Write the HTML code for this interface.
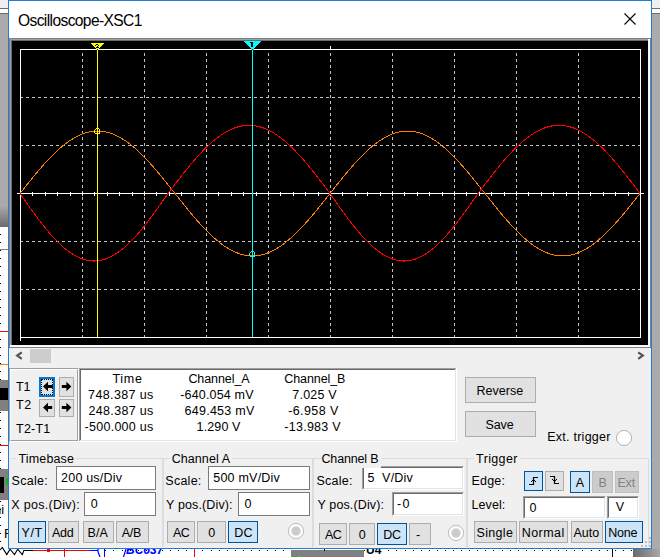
<!DOCTYPE html>
<html><head><meta charset="utf-8"><style>
html,body{margin:0;padding:0;}
body{width:660px;height:557px;overflow:hidden;position:relative;font-family:"Liberation Sans", sans-serif;}
</style></head><body>
<div style="position:absolute;left:0px;top:0px;width:660px;height:557px;background:#ffffff"></div><div style="position:absolute;left:0px;top:0px;width:8px;height:8px;background:#f0f0f0"></div><div style="position:absolute;left:0px;top:8px;width:8px;height:1px;background:#6d6d6d"></div><div style="position:absolute;left:0px;top:9px;width:8px;height:4px;background:#ffffff"></div><div style="position:absolute;left:0px;top:13px;width:8px;height:1px;background:#6d6d6d"></div><div style="position:absolute;left:0px;top:14px;width:8px;height:213px;background:linear-gradient(#aaaaaa,#aaaaaa 90%,#6c6c6c)"></div><div style="position:absolute;left:0px;top:234px;width:1px;height:1px;background:#000"></div><div style="position:absolute;left:0px;top:242px;width:1px;height:1px;background:#000"></div><div style="position:absolute;left:0px;top:250px;width:1px;height:1px;background:#000"></div><div style="position:absolute;left:0px;top:258px;width:1px;height:1px;background:#000"></div><div style="position:absolute;left:0px;top:266px;width:1px;height:1px;background:#000"></div><div style="position:absolute;left:0px;top:275px;width:1px;height:1px;background:#000"></div><div style="position:absolute;left:0px;top:283px;width:1px;height:1px;background:#000"></div><div style="position:absolute;left:0px;top:291px;width:1px;height:1px;background:#000"></div><div style="position:absolute;left:0px;top:299px;width:1px;height:1px;background:#000"></div><div style="position:absolute;left:0px;top:307px;width:1px;height:1px;background:#000"></div><div style="position:absolute;left:0px;top:315px;width:1px;height:1px;background:#000"></div><div style="position:absolute;left:0px;top:323px;width:1px;height:1px;background:#000"></div><div style="position:absolute;left:0px;top:331px;width:1px;height:1px;background:#000"></div><div style="position:absolute;left:0px;top:339px;width:1px;height:1px;background:#000"></div><div style="position:absolute;left:0px;top:347px;width:1px;height:1px;background:#000"></div><div style="position:absolute;left:0px;top:355px;width:1px;height:1px;background:#000"></div><div style="position:absolute;left:0px;top:363px;width:1px;height:1px;background:#000"></div><div style="position:absolute;left:0px;top:371px;width:1px;height:1px;background:#000"></div><div style="position:absolute;left:0px;top:379px;width:1px;height:1px;background:#000"></div><div style="position:absolute;left:0px;top:388px;width:1px;height:1px;background:#000"></div><div style="position:absolute;left:0px;top:396px;width:1px;height:1px;background:#000"></div><div style="position:absolute;left:0px;top:404px;width:1px;height:1px;background:#000"></div><div style="position:absolute;left:0px;top:412px;width:1px;height:1px;background:#000"></div><div style="position:absolute;left:0px;top:420px;width:1px;height:1px;background:#000"></div><div style="position:absolute;left:0px;top:428px;width:1px;height:1px;background:#000"></div><div style="position:absolute;left:0px;top:436px;width:1px;height:1px;background:#000"></div><div style="position:absolute;left:0px;top:444px;width:1px;height:1px;background:#000"></div><div style="position:absolute;left:0px;top:452px;width:1px;height:1px;background:#000"></div><div style="position:absolute;left:0px;top:460px;width:1px;height:1px;background:#000"></div><div style="position:absolute;left:0px;top:468px;width:1px;height:1px;background:#000"></div><div style="position:absolute;left:0px;top:476px;width:1px;height:1px;background:#000"></div><div style="position:absolute;left:0px;top:484px;width:1px;height:1px;background:#000"></div><div style="position:absolute;left:0px;top:492px;width:1px;height:1px;background:#000"></div><div style="position:absolute;left:0px;top:501px;width:1px;height:1px;background:#000"></div><div style="position:absolute;left:0px;top:509px;width:1px;height:1px;background:#000"></div><div style="position:absolute;left:0px;top:517px;width:1px;height:1px;background:#000"></div><div style="position:absolute;left:0px;top:525px;width:1px;height:1px;background:#000"></div><div style="position:absolute;left:0px;top:533px;width:1px;height:1px;background:#000"></div><div style="position:absolute;left:0px;top:541px;width:1px;height:1px;background:#000"></div><div style="position:absolute;left:0px;top:249px;width:8px;height:1px;background:#808080"></div><div style="position:absolute;left:0px;top:331px;width:8px;height:1px;background:#ff0000"></div><div style="position:absolute;left:0px;top:364px;width:8px;height:1px;background:#ff8000"></div><div style="position:absolute;left:0px;top:380px;width:8px;height:8px;background:#808080"></div><div style="position:absolute;left:0px;top:388px;width:8px;height:12px;background:#000"></div><div style="position:absolute;left:0px;top:400px;width:8px;height:11px;background:#808080"></div><div style="position:absolute;left:0px;top:445px;width:8px;height:1px;background:#ff0000"></div><div style="position:absolute;left:0px;top:469px;width:8px;height:31px;background:#808080"></div><div style="position:absolute;left:0px;top:477px;width:4px;height:16px;background:#000"></div><div style="position:absolute;left:6px;top:478px;width:2px;height:7px;background:#00c000"></div><div style="position:absolute;left:-6px;top:502px;font:13px 'Liberation Sans', sans-serif;color:#000;line-height:15px">hi</div><div style="position:absolute;left:4px;top:526px;font:13px 'Liberation Sans', sans-serif;color:#000;line-height:15px">F</div><div style="position:absolute;left:652px;top:0px;width:8px;height:8px;background:#f0f0f0"></div><div style="position:absolute;left:652px;top:8px;width:8px;height:1px;background:#6d6d6d"></div><div style="position:absolute;left:652px;top:9px;width:8px;height:4px;background:#ffffff"></div><div style="position:absolute;left:652px;top:13px;width:8px;height:1px;background:#6d6d6d"></div><div style="position:absolute;left:652px;top:14px;width:8px;height:543px;background:#ababab"></div><div style="position:absolute;left:105px;top:550px;width:1px;height:1px;background:#000"></div><div style="position:absolute;left:113px;top:550px;width:1px;height:1px;background:#000"></div><div style="position:absolute;left:122px;top:550px;width:1px;height:1px;background:#000"></div><div style="position:absolute;left:130px;top:550px;width:1px;height:1px;background:#000"></div><div style="position:absolute;left:138px;top:550px;width:1px;height:1px;background:#000"></div><div style="position:absolute;left:146px;top:550px;width:1px;height:1px;background:#000"></div><div style="position:absolute;left:154px;top:550px;width:1px;height:1px;background:#000"></div><div style="position:absolute;left:162px;top:550px;width:1px;height:1px;background:#000"></div><div style="position:absolute;left:170px;top:550px;width:1px;height:1px;background:#000"></div><div style="position:absolute;left:178px;top:550px;width:1px;height:1px;background:#000"></div><div style="position:absolute;left:186px;top:550px;width:1px;height:1px;background:#000"></div><div style="position:absolute;left:194px;top:550px;width:1px;height:1px;background:#000"></div><div style="position:absolute;left:202px;top:550px;width:1px;height:1px;background:#000"></div><div style="position:absolute;left:211px;top:550px;width:1px;height:1px;background:#000"></div><div style="position:absolute;left:219px;top:550px;width:1px;height:1px;background:#000"></div><div style="position:absolute;left:227px;top:550px;width:1px;height:1px;background:#000"></div><div style="position:absolute;left:235px;top:550px;width:1px;height:1px;background:#000"></div><div style="position:absolute;left:243px;top:550px;width:1px;height:1px;background:#000"></div><div style="position:absolute;left:251px;top:550px;width:1px;height:1px;background:#000"></div><div style="position:absolute;left:259px;top:550px;width:1px;height:1px;background:#000"></div><div style="position:absolute;left:267px;top:550px;width:1px;height:1px;background:#000"></div><div style="position:absolute;left:275px;top:550px;width:1px;height:1px;background:#000"></div><div style="position:absolute;left:283px;top:550px;width:1px;height:1px;background:#000"></div><div style="position:absolute;left:291px;top:550px;width:1px;height:1px;background:#000"></div><div style="position:absolute;left:299px;top:550px;width:1px;height:1px;background:#000"></div><div style="position:absolute;left:308px;top:550px;width:1px;height:1px;background:#000"></div><div style="position:absolute;left:316px;top:550px;width:1px;height:1px;background:#000"></div><div style="position:absolute;left:324px;top:550px;width:1px;height:1px;background:#000"></div><div style="position:absolute;left:332px;top:550px;width:1px;height:1px;background:#000"></div><div style="position:absolute;left:340px;top:550px;width:1px;height:1px;background:#000"></div><div style="position:absolute;left:348px;top:550px;width:1px;height:1px;background:#000"></div><div style="position:absolute;left:356px;top:550px;width:1px;height:1px;background:#000"></div><div style="position:absolute;left:364px;top:550px;width:1px;height:1px;background:#000"></div><div style="position:absolute;left:388px;top:550px;width:1px;height:1px;background:#000"></div><div style="position:absolute;left:396px;top:550px;width:1px;height:1px;background:#000"></div><div style="position:absolute;left:405px;top:550px;width:1px;height:1px;background:#000"></div><div style="position:absolute;left:413px;top:550px;width:1px;height:1px;background:#000"></div><div style="position:absolute;left:421px;top:550px;width:1px;height:1px;background:#000"></div><div style="position:absolute;left:429px;top:550px;width:1px;height:1px;background:#000"></div><div style="position:absolute;left:437px;top:550px;width:1px;height:1px;background:#000"></div><div style="position:absolute;left:445px;top:550px;width:1px;height:1px;background:#000"></div><div style="position:absolute;left:453px;top:550px;width:1px;height:1px;background:#000"></div><div style="position:absolute;left:461px;top:550px;width:1px;height:1px;background:#000"></div><div style="position:absolute;left:469px;top:550px;width:1px;height:1px;background:#000"></div><div style="position:absolute;left:477px;top:550px;width:1px;height:1px;background:#000"></div><div style="position:absolute;left:485px;top:550px;width:1px;height:1px;background:#000"></div><div style="position:absolute;left:493px;top:550px;width:1px;height:1px;background:#000"></div><div style="position:absolute;left:502px;top:550px;width:1px;height:1px;background:#000"></div><div style="position:absolute;left:510px;top:550px;width:1px;height:1px;background:#000"></div><div style="position:absolute;left:518px;top:550px;width:1px;height:1px;background:#000"></div><div style="position:absolute;left:526px;top:550px;width:1px;height:1px;background:#000"></div><div style="position:absolute;left:534px;top:550px;width:1px;height:1px;background:#000"></div><div style="position:absolute;left:542px;top:550px;width:1px;height:1px;background:#000"></div><div style="position:absolute;left:550px;top:550px;width:1px;height:1px;background:#000"></div><div style="position:absolute;left:558px;top:550px;width:1px;height:1px;background:#000"></div><div style="position:absolute;left:566px;top:550px;width:1px;height:1px;background:#000"></div><div style="position:absolute;left:574px;top:550px;width:1px;height:1px;background:#000"></div><div style="position:absolute;left:582px;top:550px;width:1px;height:1px;background:#000"></div><div style="position:absolute;left:591px;top:550px;width:1px;height:1px;background:#000"></div><div style="position:absolute;left:599px;top:550px;width:1px;height:1px;background:#000"></div><div style="position:absolute;left:607px;top:550px;width:1px;height:1px;background:#000"></div><div style="position:absolute;left:615px;top:550px;width:1px;height:1px;background:#000"></div><div style="position:absolute;left:623px;top:550px;width:1px;height:1px;background:#000"></div><div style="position:absolute;left:631px;top:550px;width:1px;height:1px;background:#000"></div><div style="position:absolute;left:291px;top:550px;width:73px;height:7px;background:#808080"></div><div style="position:absolute;left:298px;top:556px;width:2px;height:1px;background:#00ff00"></div><div style="position:absolute;left:324px;top:549px;width:1px;height:2px;background:#000"></div><div style="position:absolute;left:612px;top:549px;width:1px;height:8px;background:linear-gradient(#000,#000)"></div><div style="position:absolute;left:633px;top:549px;width:27px;height:8px;background:linear-gradient(90deg,#6a6a6a,#a8a8a8)"></div><div style="position:absolute;left:33px;top:550px;width:57px;height:1px;background:#ff0000"></div><div style="position:absolute;left:47px;top:549px;width:3px;height:3px;background:#ff0000"></div><div style="position:absolute;left:64px;top:549px;width:1px;height:8px;background:#ff0000"></div><div style="position:absolute;left:194px;top:549px;width:1px;height:8px;background:#ff0000"></div><div style="position:absolute;left:90px;top:550px;width:8px;height:1px;background:#0000ff"></div><div style="position:absolute;left:24px;top:550px;width:9px;height:1px;background:#000"></div><div style="position:absolute;left:104px;top:549px;width:1px;height:8px;background:#0000ff"></div><svg style="position:absolute;left:0;top:544px" width="130" height="13"><polyline points="0,6 2.3,3.4 6.8,10.6 10,5.2 14.5,10.6 17.7,5.2 22.3,10.6 24,6" fill="none" stroke="#000" stroke-width="1.1"/><path d="M98 5 L98 8 L100 13 M126 5 L123.5 13" stroke="#0000ff" stroke-width="1.2" fill="none"/></svg><div style="position:absolute;left:126px;top:544.34px;font:italic bold 12px 'Liberation Sans', sans-serif;color:#0000ff;line-height:12px">BC637</div><div style="position:absolute;left:366px;top:544.34px;font:bold 12px 'Liberation Sans', sans-serif;color:#000;line-height:12px">U4</div><div style="position:absolute;left:8px;top:0px;width:644px;height:549px;background:#1c7ed6"></div><div style="position:absolute;left:9px;top:1px;width:642px;height:37px;background:#ffffff"></div><div style="position:absolute;left:9px;top:38px;width:642px;height:510px;background:#f0f0f0"></div><div style="position:absolute;left:18.00px;top:12.79px;font-size:15.6px;line-height:15.6px;color:#000;white-space:pre;letter-spacing:-0.62px">Oscilloscope-XSC1</div><svg style="position:absolute;left:620px;top:9px" width="20" height="20"><path d="M4.5 4.5 L15.5 15.5 M15.5 4.5 L4.5 15.5" stroke="#000" stroke-width="1.1"/></svg><div style="position:absolute;left:9px;top:38px;width:642px;height:310px;background:#7f7f7f"></div><div style="position:absolute;left:10px;top:39px;width:640px;height:308px;background:#ffffff"></div><div style="position:absolute;left:10px;top:39px;width:638px;height:306px;background:#a0a0a0"></div><div style="position:absolute;left:11px;top:40px;width:638px;height:306px;background:#f4f4f4"></div><div style="position:absolute;left:11px;top:40px;width:637px;height:305px;background:#696969"></div><div style="position:absolute;left:12px;top:41px;width:636px;height:304px;background:#000000"></div><svg style="position:absolute;left:12px;top:41px" width="636" height="304" viewBox="12 41 636 304" shape-rendering="crispEdges"><line x1="82.5" y1="53" x2="82.5" y2="337" stroke="#c0c0c0" stroke-width="1" stroke-dasharray="3 3"/><line x1="144.5" y1="53" x2="144.5" y2="337" stroke="#c0c0c0" stroke-width="1" stroke-dasharray="3 3"/><line x1="206.5" y1="53" x2="206.5" y2="337" stroke="#c0c0c0" stroke-width="1" stroke-dasharray="3 3"/><line x1="268.5" y1="53" x2="268.5" y2="337" stroke="#c0c0c0" stroke-width="1" stroke-dasharray="3 3"/><line x1="330.5" y1="53" x2="330.5" y2="337" stroke="#c0c0c0" stroke-width="1" stroke-dasharray="3 3"/><line x1="392.5" y1="53" x2="392.5" y2="337" stroke="#c0c0c0" stroke-width="1" stroke-dasharray="3 3"/><line x1="454.5" y1="53" x2="454.5" y2="337" stroke="#c0c0c0" stroke-width="1" stroke-dasharray="3 3"/><line x1="516.5" y1="53" x2="516.5" y2="337" stroke="#c0c0c0" stroke-width="1" stroke-dasharray="3 3"/><line x1="578.5" y1="53" x2="578.5" y2="337" stroke="#c0c0c0" stroke-width="1" stroke-dasharray="3 3"/><line x1="20" y1="97.5" x2="640" y2="97.5" stroke="#c0c0c0" stroke-width="1" stroke-dasharray="3 3"/><line x1="20" y1="145.5" x2="640" y2="145.5" stroke="#c0c0c0" stroke-width="1" stroke-dasharray="3 3"/><line x1="20" y1="241.5" x2="640" y2="241.5" stroke="#c0c0c0" stroke-width="1" stroke-dasharray="3 3"/><line x1="20" y1="289.5" x2="640" y2="289.5" stroke="#c0c0c0" stroke-width="1" stroke-dasharray="3 3"/><rect x="20.5" y="49.5" width="620" height="288" fill="none" stroke="#ffffff" stroke-width="1"/><line x1="20.5" y1="337" x2="20.5" y2="341" stroke="#fff"/><line x1="17" y1="193.5" x2="644" y2="193.5" stroke="#ffffff" stroke-width="1"/><line x1="32.5" y1="192" x2="32.5" y2="196" stroke="#fff"/><line x1="45.5" y1="192" x2="45.5" y2="196" stroke="#fff"/><line x1="57.5" y1="192" x2="57.5" y2="196" stroke="#fff"/><line x1="70.5" y1="192" x2="70.5" y2="196" stroke="#fff"/><line x1="82.5" y1="192" x2="82.5" y2="196" stroke="#fff"/><line x1="94.5" y1="192" x2="94.5" y2="196" stroke="#fff"/><line x1="107.5" y1="192" x2="107.5" y2="196" stroke="#fff"/><line x1="119.5" y1="192" x2="119.5" y2="196" stroke="#fff"/><line x1="132.5" y1="192" x2="132.5" y2="196" stroke="#fff"/><line x1="144.5" y1="192" x2="144.5" y2="196" stroke="#fff"/><line x1="156.5" y1="192" x2="156.5" y2="196" stroke="#fff"/><line x1="169.5" y1="192" x2="169.5" y2="196" stroke="#fff"/><line x1="181.5" y1="192" x2="181.5" y2="196" stroke="#fff"/><line x1="194.5" y1="192" x2="194.5" y2="196" stroke="#fff"/><line x1="206.5" y1="192" x2="206.5" y2="196" stroke="#fff"/><line x1="218.5" y1="192" x2="218.5" y2="196" stroke="#fff"/><line x1="231.5" y1="192" x2="231.5" y2="196" stroke="#fff"/><line x1="243.5" y1="192" x2="243.5" y2="196" stroke="#fff"/><line x1="256.5" y1="192" x2="256.5" y2="196" stroke="#fff"/><line x1="268.5" y1="192" x2="268.5" y2="196" stroke="#fff"/><line x1="280.5" y1="192" x2="280.5" y2="196" stroke="#fff"/><line x1="293.5" y1="192" x2="293.5" y2="196" stroke="#fff"/><line x1="305.5" y1="192" x2="305.5" y2="196" stroke="#fff"/><line x1="318.5" y1="192" x2="318.5" y2="196" stroke="#fff"/><line x1="330.5" y1="192" x2="330.5" y2="196" stroke="#fff"/><line x1="342.5" y1="192" x2="342.5" y2="196" stroke="#fff"/><line x1="355.5" y1="192" x2="355.5" y2="196" stroke="#fff"/><line x1="367.5" y1="192" x2="367.5" y2="196" stroke="#fff"/><line x1="380.5" y1="192" x2="380.5" y2="196" stroke="#fff"/><line x1="392.5" y1="192" x2="392.5" y2="196" stroke="#fff"/><line x1="404.5" y1="192" x2="404.5" y2="196" stroke="#fff"/><line x1="417.5" y1="192" x2="417.5" y2="196" stroke="#fff"/><line x1="429.5" y1="192" x2="429.5" y2="196" stroke="#fff"/><line x1="442.5" y1="192" x2="442.5" y2="196" stroke="#fff"/><line x1="454.5" y1="192" x2="454.5" y2="196" stroke="#fff"/><line x1="466.5" y1="192" x2="466.5" y2="196" stroke="#fff"/><line x1="479.5" y1="192" x2="479.5" y2="196" stroke="#fff"/><line x1="491.5" y1="192" x2="491.5" y2="196" stroke="#fff"/><line x1="504.5" y1="192" x2="504.5" y2="196" stroke="#fff"/><line x1="516.5" y1="192" x2="516.5" y2="196" stroke="#fff"/><line x1="528.5" y1="192" x2="528.5" y2="196" stroke="#fff"/><line x1="541.5" y1="192" x2="541.5" y2="196" stroke="#fff"/><line x1="553.5" y1="192" x2="553.5" y2="196" stroke="#fff"/><line x1="566.5" y1="192" x2="566.5" y2="196" stroke="#fff"/><line x1="578.5" y1="192" x2="578.5" y2="196" stroke="#fff"/><line x1="590.5" y1="192" x2="590.5" y2="196" stroke="#fff"/><line x1="603.5" y1="192" x2="603.5" y2="196" stroke="#fff"/><line x1="615.5" y1="192" x2="615.5" y2="196" stroke="#fff"/><line x1="628.5" y1="192" x2="628.5" y2="196" stroke="#fff"/><line x1="330.5" y1="46" x2="330.5" y2="49" stroke="#fff"/><polyline points="20.0,193.50 20.5,192.87 21.0,192.24 21.5,191.60 22.0,190.97 22.5,190.34 23.0,189.71 23.5,189.08 24.0,188.45 24.5,187.82 25.0,187.19 25.5,186.56 26.0,185.93 26.5,185.30 27.0,184.68 27.5,184.05 28.0,183.43 28.5,182.80 29.0,182.18 29.5,181.56 30.0,180.94 30.5,180.32 31.0,179.70 31.5,179.09 32.0,178.47 32.5,177.86 33.0,177.25 33.5,176.64 34.0,176.03 34.5,175.42 35.0,174.82 35.5,174.22 36.0,173.62 36.5,173.02 37.0,172.42 37.5,171.83 38.0,171.24 38.5,170.65 39.0,170.06 39.5,169.47 40.0,168.89 40.5,168.31 41.0,167.74 41.5,167.16 42.0,166.59 42.5,166.02 43.0,165.45 43.5,164.89 44.0,164.33 44.5,163.77 45.0,163.22 45.5,162.67 46.0,162.12 46.5,161.57 47.0,161.03 47.5,160.49 48.0,159.96 48.5,159.43 49.0,158.90 49.5,158.37 50.0,157.85 50.5,157.34 51.0,156.82 51.5,156.31 52.0,155.81 52.5,155.30 53.0,154.81 53.5,154.31 54.0,153.82 54.5,153.34 55.0,152.85 55.5,152.38 56.0,151.90 56.5,151.43 57.0,150.97 57.5,150.51 58.0,150.05 58.5,149.60 59.0,149.15 59.5,148.71 60.0,148.27 60.5,147.84 61.0,147.41 61.5,146.99 62.0,146.57 62.5,146.15 63.0,145.74 63.5,145.34 64.0,144.94 64.5,144.55 65.0,144.16 65.5,143.77 66.0,143.39 66.5,143.02 67.0,142.65 67.5,142.28 68.0,141.93 68.5,141.57 69.0,141.22 69.5,140.88 70.0,140.54 70.5,140.21 71.0,139.89 71.5,139.57 72.0,139.25 72.5,138.94 73.0,138.64 73.5,138.34 74.0,138.05 74.5,137.76 75.0,137.48 75.5,137.20 76.0,136.93 76.5,136.67 77.0,136.41 77.5,136.16 78.0,135.91 78.5,135.67 79.0,135.44 79.5,135.21 80.0,134.98 80.5,134.77 81.0,134.56 81.5,134.35 82.0,134.15 82.5,133.96 83.0,133.78 83.5,133.60 84.0,133.42 84.5,133.25 85.0,133.09 85.5,132.94 86.0,132.79 86.5,132.64 87.0,132.51 87.5,132.38 88.0,132.25 88.5,132.14 89.0,132.02 89.5,131.92 90.0,131.82 90.5,131.73 91.0,131.64 91.5,131.56 92.0,131.49 92.5,131.42 93.0,131.36 93.5,131.30 94.0,131.26 94.5,131.22 95.0,131.18 95.5,131.15 96.0,131.13 96.5,131.11 97.0,131.10 97.5,131.10 98.0,131.10 98.5,131.11 99.0,131.13 99.5,131.15 100.0,131.18 100.5,131.22 101.0,131.26 101.5,131.30 102.0,131.36 102.5,131.42 103.0,131.49 103.5,131.56 104.0,131.64 104.5,131.73 105.0,131.82 105.5,131.92 106.0,132.02 106.5,132.14 107.0,132.25 107.5,132.38 108.0,132.51 108.5,132.64 109.0,132.79 109.5,132.94 110.0,133.09 110.5,133.25 111.0,133.42 111.5,133.60 112.0,133.78 112.5,133.96 113.0,134.15 113.5,134.35 114.0,134.56 114.5,134.77 115.0,134.98 115.5,135.21 116.0,135.44 116.5,135.67 117.0,135.91 117.5,136.16 118.0,136.41 118.5,136.67 119.0,136.93 119.5,137.20 120.0,137.48 120.5,137.76 121.0,138.05 121.5,138.34 122.0,138.64 122.5,138.94 123.0,139.25 123.5,139.57 124.0,139.89 124.5,140.21 125.0,140.54 125.5,140.88 126.0,141.22 126.5,141.57 127.0,141.93 127.5,142.28 128.0,142.65 128.5,143.02 129.0,143.39 129.5,143.77 130.0,144.16 130.5,144.55 131.0,144.94 131.5,145.34 132.0,145.74 132.5,146.15 133.0,146.57 133.5,146.99 134.0,147.41 134.5,147.84 135.0,148.27 135.5,148.71 136.0,149.15 136.5,149.60 137.0,150.05 137.5,150.51 138.0,150.97 138.5,151.43 139.0,151.90 139.5,152.38 140.0,152.85 140.5,153.34 141.0,153.82 141.5,154.31 142.0,154.81 142.5,155.30 143.0,155.81 143.5,156.31 144.0,156.82 144.5,157.34 145.0,157.85 145.5,158.37 146.0,158.90 146.5,159.43 147.0,159.96 147.5,160.49 148.0,161.03 148.5,161.57 149.0,162.12 149.5,162.67 150.0,163.22 150.5,163.77 151.0,164.33 151.5,164.89 152.0,165.45 152.5,166.02 153.0,166.59 153.5,167.16 154.0,167.74 154.5,168.31 155.0,168.89 155.5,169.47 156.0,170.06 156.5,170.65 157.0,171.24 157.5,171.83 158.0,172.42 158.5,173.02 159.0,173.62 159.5,174.22 160.0,174.82 160.5,175.42 161.0,176.03 161.5,176.64 162.0,177.25 162.5,177.86 163.0,178.47 163.5,179.09 164.0,179.70 164.5,180.32 165.0,180.94 165.5,181.56 166.0,182.18 166.5,182.80 167.0,183.43 167.5,184.05 168.0,184.68 168.5,185.30 169.0,185.93 169.5,186.56 170.0,187.19 170.5,187.82 171.0,188.45 171.5,189.08 172.0,189.71 172.5,190.34 173.0,190.97 173.5,191.60 174.0,192.24 174.5,192.87 175.0,193.50 175.5,194.13 176.0,194.76 176.5,195.40 177.0,196.03 177.5,196.66 178.0,197.29 178.5,197.92 179.0,198.55 179.5,199.18 180.0,199.81 180.5,200.44 181.0,201.07 181.5,201.70 182.0,202.32 182.5,202.95 183.0,203.57 183.5,204.20 184.0,204.82 184.5,205.44 185.0,206.06 185.5,206.68 186.0,207.30 186.5,207.91 187.0,208.53 187.5,209.14 188.0,209.75 188.5,210.36 189.0,210.97 189.5,211.58 190.0,212.18 190.5,212.78 191.0,213.38 191.5,213.98 192.0,214.58 192.5,215.17 193.0,215.76 193.5,216.35 194.0,216.94 194.5,217.53 195.0,218.11 195.5,218.69 196.0,219.26 196.5,219.84 197.0,220.41 197.5,220.98 198.0,221.55 198.5,222.11 199.0,222.67 199.5,223.23 200.0,223.78 200.5,224.33 201.0,224.88 201.5,225.43 202.0,225.97 202.5,226.51 203.0,227.04 203.5,227.57 204.0,228.10 204.5,228.63 205.0,229.15 205.5,229.66 206.0,230.18 206.5,230.69 207.0,231.19 207.5,231.70 208.0,232.19 208.5,232.69 209.0,233.18 209.5,233.66 210.0,234.15 210.5,234.62 211.0,235.10 211.5,235.57 212.0,236.03 212.5,236.49 213.0,236.95 213.5,237.40 214.0,237.85 214.5,238.29 215.0,238.73 215.5,239.16 216.0,239.59 216.5,240.01 217.0,240.43 217.5,240.85 218.0,241.26 218.5,241.66 219.0,242.06 219.5,242.45 220.0,242.84 220.5,243.23 221.0,243.61 221.5,243.98 222.0,244.35 222.5,244.72 223.0,245.07 223.5,245.43 224.0,245.78 224.5,246.12 225.0,246.46 225.5,246.79 226.0,247.11 226.5,247.43 227.0,247.75 227.5,248.06 228.0,248.36 228.5,248.66 229.0,248.95 229.5,249.24 230.0,249.52 230.5,249.80 231.0,250.07 231.5,250.33 232.0,250.59 232.5,250.84 233.0,251.09 233.5,251.33 234.0,251.56 234.5,251.79 235.0,252.02 235.5,252.23 236.0,252.44 236.5,252.65 237.0,252.85 237.5,253.04 238.0,253.22 238.5,253.40 239.0,253.58 239.5,253.75 240.0,253.91 240.5,254.06 241.0,254.21 241.5,254.36 242.0,254.49 242.5,254.62 243.0,254.75 243.5,254.86 244.0,254.98 244.5,255.08 245.0,255.18 245.5,255.27 246.0,255.36 246.5,255.44 247.0,255.51 247.5,255.58 248.0,255.64 248.5,255.70 249.0,255.74 249.5,255.78 250.0,255.82 250.5,255.85 251.0,255.87 251.5,255.89 252.0,255.90 252.5,255.90 253.0,255.90 253.5,255.89 254.0,255.87 254.5,255.85 255.0,255.82 255.5,255.78 256.0,255.74 256.5,255.70 257.0,255.64 257.5,255.58 258.0,255.51 258.5,255.44 259.0,255.36 259.5,255.27 260.0,255.18 260.5,255.08 261.0,254.98 261.5,254.86 262.0,254.75 262.5,254.62 263.0,254.49 263.5,254.36 264.0,254.21 264.5,254.06 265.0,253.91 265.5,253.75 266.0,253.58 266.5,253.40 267.0,253.22 267.5,253.04 268.0,252.85 268.5,252.65 269.0,252.44 269.5,252.23 270.0,252.02 270.5,251.79 271.0,251.56 271.5,251.33 272.0,251.09 272.5,250.84 273.0,250.59 273.5,250.33 274.0,250.07 274.5,249.80 275.0,249.52 275.5,249.24 276.0,248.95 276.5,248.66 277.0,248.36 277.5,248.06 278.0,247.75 278.5,247.43 279.0,247.11 279.5,246.79 280.0,246.46 280.5,246.12 281.0,245.78 281.5,245.43 282.0,245.07 282.5,244.72 283.0,244.35 283.5,243.98 284.0,243.61 284.5,243.23 285.0,242.84 285.5,242.45 286.0,242.06 286.5,241.66 287.0,241.26 287.5,240.85 288.0,240.43 288.5,240.01 289.0,239.59 289.5,239.16 290.0,238.73 290.5,238.29 291.0,237.85 291.5,237.40 292.0,236.95 292.5,236.49 293.0,236.03 293.5,235.57 294.0,235.10 294.5,234.62 295.0,234.15 295.5,233.66 296.0,233.18 296.5,232.69 297.0,232.19 297.5,231.70 298.0,231.19 298.5,230.69 299.0,230.18 299.5,229.66 300.0,229.15 300.5,228.63 301.0,228.10 301.5,227.57 302.0,227.04 302.5,226.51 303.0,225.97 303.5,225.43 304.0,224.88 304.5,224.33 305.0,223.78 305.5,223.23 306.0,222.67 306.5,222.11 307.0,221.55 307.5,220.98 308.0,220.41 308.5,219.84 309.0,219.26 309.5,218.69 310.0,218.11 310.5,217.53 311.0,216.94 311.5,216.35 312.0,215.76 312.5,215.17 313.0,214.58 313.5,213.98 314.0,213.38 314.5,212.78 315.0,212.18 315.5,211.58 316.0,210.97 316.5,210.36 317.0,209.75 317.5,209.14 318.0,208.53 318.5,207.91 319.0,207.30 319.5,206.68 320.0,206.06 320.5,205.44 321.0,204.82 321.5,204.20 322.0,203.57 322.5,202.95 323.0,202.32 323.5,201.70 324.0,201.07 324.5,200.44 325.0,199.81 325.5,199.18 326.0,198.55 326.5,197.92 327.0,197.29 327.5,196.66 328.0,196.03 328.5,195.40 329.0,194.76 329.5,194.13 330.0,193.50 330.5,192.87 331.0,192.24 331.5,191.60 332.0,190.97 332.5,190.34 333.0,189.71 333.5,189.08 334.0,188.45 334.5,187.82 335.0,187.19 335.5,186.56 336.0,185.93 336.5,185.30 337.0,184.68 337.5,184.05 338.0,183.43 338.5,182.80 339.0,182.18 339.5,181.56 340.0,180.94 340.5,180.32 341.0,179.70 341.5,179.09 342.0,178.47 342.5,177.86 343.0,177.25 343.5,176.64 344.0,176.03 344.5,175.42 345.0,174.82 345.5,174.22 346.0,173.62 346.5,173.02 347.0,172.42 347.5,171.83 348.0,171.24 348.5,170.65 349.0,170.06 349.5,169.47 350.0,168.89 350.5,168.31 351.0,167.74 351.5,167.16 352.0,166.59 352.5,166.02 353.0,165.45 353.5,164.89 354.0,164.33 354.5,163.77 355.0,163.22 355.5,162.67 356.0,162.12 356.5,161.57 357.0,161.03 357.5,160.49 358.0,159.96 358.5,159.43 359.0,158.90 359.5,158.37 360.0,157.85 360.5,157.34 361.0,156.82 361.5,156.31 362.0,155.81 362.5,155.30 363.0,154.81 363.5,154.31 364.0,153.82 364.5,153.34 365.0,152.85 365.5,152.38 366.0,151.90 366.5,151.43 367.0,150.97 367.5,150.51 368.0,150.05 368.5,149.60 369.0,149.15 369.5,148.71 370.0,148.27 370.5,147.84 371.0,147.41 371.5,146.99 372.0,146.57 372.5,146.15 373.0,145.74 373.5,145.34 374.0,144.94 374.5,144.55 375.0,144.16 375.5,143.77 376.0,143.39 376.5,143.02 377.0,142.65 377.5,142.28 378.0,141.93 378.5,141.57 379.0,141.22 379.5,140.88 380.0,140.54 380.5,140.21 381.0,139.89 381.5,139.57 382.0,139.25 382.5,138.94 383.0,138.64 383.5,138.34 384.0,138.05 384.5,137.76 385.0,137.48 385.5,137.20 386.0,136.93 386.5,136.67 387.0,136.41 387.5,136.16 388.0,135.91 388.5,135.67 389.0,135.44 389.5,135.21 390.0,134.98 390.5,134.77 391.0,134.56 391.5,134.35 392.0,134.15 392.5,133.96 393.0,133.78 393.5,133.60 394.0,133.42 394.5,133.25 395.0,133.09 395.5,132.94 396.0,132.79 396.5,132.64 397.0,132.51 397.5,132.38 398.0,132.25 398.5,132.14 399.0,132.02 399.5,131.92 400.0,131.82 400.5,131.73 401.0,131.64 401.5,131.56 402.0,131.49 402.5,131.42 403.0,131.36 403.5,131.30 404.0,131.26 404.5,131.22 405.0,131.18 405.5,131.15 406.0,131.13 406.5,131.11 407.0,131.10 407.5,131.10 408.0,131.10 408.5,131.11 409.0,131.13 409.5,131.15 410.0,131.18 410.5,131.22 411.0,131.26 411.5,131.30 412.0,131.36 412.5,131.42 413.0,131.49 413.5,131.56 414.0,131.64 414.5,131.73 415.0,131.82 415.5,131.92 416.0,132.02 416.5,132.14 417.0,132.25 417.5,132.38 418.0,132.51 418.5,132.64 419.0,132.79 419.5,132.94 420.0,133.09 420.5,133.25 421.0,133.42 421.5,133.60 422.0,133.78 422.5,133.96 423.0,134.15 423.5,134.35 424.0,134.56 424.5,134.77 425.0,134.98 425.5,135.21 426.0,135.44 426.5,135.67 427.0,135.91 427.5,136.16 428.0,136.41 428.5,136.67 429.0,136.93 429.5,137.20 430.0,137.48 430.5,137.76 431.0,138.05 431.5,138.34 432.0,138.64 432.5,138.94 433.0,139.25 433.5,139.57 434.0,139.89 434.5,140.21 435.0,140.54 435.5,140.88 436.0,141.22 436.5,141.57 437.0,141.93 437.5,142.28 438.0,142.65 438.5,143.02 439.0,143.39 439.5,143.77 440.0,144.16 440.5,144.55 441.0,144.94 441.5,145.34 442.0,145.74 442.5,146.15 443.0,146.57 443.5,146.99 444.0,147.41 444.5,147.84 445.0,148.27 445.5,148.71 446.0,149.15 446.5,149.60 447.0,150.05 447.5,150.51 448.0,150.97 448.5,151.43 449.0,151.90 449.5,152.38 450.0,152.85 450.5,153.34 451.0,153.82 451.5,154.31 452.0,154.81 452.5,155.30 453.0,155.81 453.5,156.31 454.0,156.82 454.5,157.34 455.0,157.85 455.5,158.37 456.0,158.90 456.5,159.43 457.0,159.96 457.5,160.49 458.0,161.03 458.5,161.57 459.0,162.12 459.5,162.67 460.0,163.22 460.5,163.77 461.0,164.33 461.5,164.89 462.0,165.45 462.5,166.02 463.0,166.59 463.5,167.16 464.0,167.74 464.5,168.31 465.0,168.89 465.5,169.47 466.0,170.06 466.5,170.65 467.0,171.24 467.5,171.83 468.0,172.42 468.5,173.02 469.0,173.62 469.5,174.22 470.0,174.82 470.5,175.42 471.0,176.03 471.5,176.64 472.0,177.25 472.5,177.86 473.0,178.47 473.5,179.09 474.0,179.70 474.5,180.32 475.0,180.94 475.5,181.56 476.0,182.18 476.5,182.80 477.0,183.43 477.5,184.05 478.0,184.68 478.5,185.30 479.0,185.93 479.5,186.56 480.0,187.19 480.5,187.82 481.0,188.45 481.5,189.08 482.0,189.71 482.5,190.34 483.0,190.97 483.5,191.60 484.0,192.24 484.5,192.87 485.0,193.50 485.5,194.13 486.0,194.76 486.5,195.40 487.0,196.03 487.5,196.66 488.0,197.29 488.5,197.92 489.0,198.55 489.5,199.18 490.0,199.81 490.5,200.44 491.0,201.07 491.5,201.70 492.0,202.32 492.5,202.95 493.0,203.57 493.5,204.20 494.0,204.82 494.5,205.44 495.0,206.06 495.5,206.68 496.0,207.30 496.5,207.91 497.0,208.53 497.5,209.14 498.0,209.75 498.5,210.36 499.0,210.97 499.5,211.58 500.0,212.18 500.5,212.78 501.0,213.38 501.5,213.98 502.0,214.58 502.5,215.17 503.0,215.76 503.5,216.35 504.0,216.94 504.5,217.53 505.0,218.11 505.5,218.69 506.0,219.26 506.5,219.84 507.0,220.41 507.5,220.98 508.0,221.55 508.5,222.11 509.0,222.67 509.5,223.23 510.0,223.78 510.5,224.33 511.0,224.88 511.5,225.43 512.0,225.97 512.5,226.51 513.0,227.04 513.5,227.57 514.0,228.10 514.5,228.63 515.0,229.15 515.5,229.66 516.0,230.18 516.5,230.69 517.0,231.19 517.5,231.70 518.0,232.19 518.5,232.69 519.0,233.18 519.5,233.66 520.0,234.15 520.5,234.62 521.0,235.10 521.5,235.57 522.0,236.03 522.5,236.49 523.0,236.95 523.5,237.40 524.0,237.85 524.5,238.29 525.0,238.73 525.5,239.16 526.0,239.59 526.5,240.01 527.0,240.43 527.5,240.85 528.0,241.26 528.5,241.66 529.0,242.06 529.5,242.45 530.0,242.84 530.5,243.23 531.0,243.61 531.5,243.98 532.0,244.35 532.5,244.72 533.0,245.07 533.5,245.43 534.0,245.78 534.5,246.12 535.0,246.46 535.5,246.79 536.0,247.11 536.5,247.43 537.0,247.75 537.5,248.06 538.0,248.36 538.5,248.66 539.0,248.95 539.5,249.24 540.0,249.52 540.5,249.80 541.0,250.07 541.5,250.33 542.0,250.59 542.5,250.84 543.0,251.09 543.5,251.33 544.0,251.56 544.5,251.79 545.0,252.02 545.5,252.23 546.0,252.44 546.5,252.65 547.0,252.85 547.5,253.04 548.0,253.22 548.5,253.40 549.0,253.58 549.5,253.75 550.0,253.91 550.5,254.06 551.0,254.21 551.5,254.36 552.0,254.49 552.5,254.62 553.0,254.75 553.5,254.86 554.0,254.98 554.5,255.08 555.0,255.18 555.5,255.27 556.0,255.36 556.5,255.44 557.0,255.51 557.5,255.58 558.0,255.64 558.5,255.70 559.0,255.74 559.5,255.78 560.0,255.82 560.5,255.85 561.0,255.87 561.5,255.89 562.0,255.90 562.5,255.90 563.0,255.90 563.5,255.89 564.0,255.87 564.5,255.85 565.0,255.82 565.5,255.78 566.0,255.74 566.5,255.70 567.0,255.64 567.5,255.58 568.0,255.51 568.5,255.44 569.0,255.36 569.5,255.27 570.0,255.18 570.5,255.08 571.0,254.98 571.5,254.86 572.0,254.75 572.5,254.62 573.0,254.49 573.5,254.36 574.0,254.21 574.5,254.06 575.0,253.91 575.5,253.75 576.0,253.58 576.5,253.40 577.0,253.22 577.5,253.04 578.0,252.85 578.5,252.65 579.0,252.44 579.5,252.23 580.0,252.02 580.5,251.79 581.0,251.56 581.5,251.33 582.0,251.09 582.5,250.84 583.0,250.59 583.5,250.33 584.0,250.07 584.5,249.80 585.0,249.52 585.5,249.24 586.0,248.95 586.5,248.66 587.0,248.36 587.5,248.06 588.0,247.75 588.5,247.43 589.0,247.11 589.5,246.79 590.0,246.46 590.5,246.12 591.0,245.78 591.5,245.43 592.0,245.07 592.5,244.72 593.0,244.35 593.5,243.98 594.0,243.61 594.5,243.23 595.0,242.84 595.5,242.45 596.0,242.06 596.5,241.66 597.0,241.26 597.5,240.85 598.0,240.43 598.5,240.01 599.0,239.59 599.5,239.16 600.0,238.73 600.5,238.29 601.0,237.85 601.5,237.40 602.0,236.95 602.5,236.49 603.0,236.03 603.5,235.57 604.0,235.10 604.5,234.62 605.0,234.15 605.5,233.66 606.0,233.18 606.5,232.69 607.0,232.19 607.5,231.70 608.0,231.19 608.5,230.69 609.0,230.18 609.5,229.66 610.0,229.15 610.5,228.63 611.0,228.10 611.5,227.57 612.0,227.04 612.5,226.51 613.0,225.97 613.5,225.43 614.0,224.88 614.5,224.33 615.0,223.78 615.5,223.23 616.0,222.67 616.5,222.11 617.0,221.55 617.5,220.98 618.0,220.41 618.5,219.84 619.0,219.26 619.5,218.69 620.0,218.11 620.5,217.53 621.0,216.94 621.5,216.35 622.0,215.76 622.5,215.17 623.0,214.58 623.5,213.98 624.0,213.38 624.5,212.78 625.0,212.18 625.5,211.58 626.0,210.97 626.5,210.36 627.0,209.75 627.5,209.14 628.0,208.53 628.5,207.91 629.0,207.30 629.5,206.68 630.0,206.06 630.5,205.44 631.0,204.82 631.5,204.20 632.0,203.57 632.5,202.95 633.0,202.32 633.5,201.70 634.0,201.07 634.5,200.44 635.0,199.81 635.5,199.18 636.0,198.55 636.5,197.92 637.0,197.29 637.5,196.66 638.0,196.03 638.5,195.40 639.0,194.76 639.5,194.13 640.0,193.50" fill="none" stroke="#ff8000" stroke-width="1" shape-rendering="crispEdges"/><polyline points="20.0,193.50 20.5,194.22 21.0,194.93 21.5,195.65 22.0,196.36 22.5,197.08 23.0,197.80 23.5,198.51 24.0,199.22 24.5,199.94 25.0,200.65 25.5,201.36 26.0,202.07 26.5,202.78 27.0,203.49 27.5,204.20 28.0,204.91 28.5,205.61 29.0,206.32 29.5,207.02 30.0,207.72 30.5,208.42 31.0,209.12 31.5,209.81 32.0,210.51 32.5,211.20 33.0,211.89 33.5,212.58 34.0,213.27 34.5,213.95 35.0,214.63 35.5,215.31 36.0,215.99 36.5,216.66 37.0,217.33 37.5,218.00 38.0,218.67 38.5,219.33 39.0,219.99 39.5,220.65 40.0,221.30 40.5,221.95 41.0,222.60 41.5,223.25 42.0,223.89 42.5,224.53 43.0,225.16 43.5,225.79 44.0,226.42 44.5,227.04 45.0,227.66 45.5,228.28 46.0,228.89 46.5,229.50 47.0,230.10 47.5,230.70 48.0,231.30 48.5,231.89 49.0,232.48 49.5,233.06 50.0,233.64 50.5,234.21 51.0,234.78 51.5,235.35 52.0,235.90 52.5,236.46 53.0,237.01 53.5,237.56 54.0,238.10 54.5,238.63 55.0,239.16 55.5,239.69 56.0,240.21 56.5,240.72 57.0,241.23 57.5,241.73 58.0,242.23 58.5,242.72 59.0,243.21 59.5,243.69 60.0,244.17 60.5,244.64 61.0,245.11 61.5,245.56 62.0,246.02 62.5,246.46 63.0,246.91 63.5,247.34 64.0,247.77 64.5,248.19 65.0,248.61 65.5,249.02 66.0,249.42 66.5,249.82 67.0,250.21 67.5,250.60 68.0,250.98 68.5,251.35 69.0,251.72 69.5,252.08 70.0,252.43 70.5,252.77 71.0,253.11 71.5,253.45 72.0,253.77 72.5,254.09 73.0,254.40 73.5,254.71 74.0,255.01 74.5,255.30 75.0,255.58 75.5,255.86 76.0,256.13 76.5,256.40 77.0,256.65 77.5,256.90 78.0,257.14 78.5,257.38 79.0,257.61 79.5,257.83 80.0,258.04 80.5,258.25 81.0,258.45 81.5,258.64 82.0,258.82 82.5,259.00 83.0,259.17 83.5,259.33 84.0,259.48 84.5,259.63 85.0,259.77 85.5,259.90 86.0,260.03 86.5,260.15 87.0,260.26 87.5,260.36 88.0,260.45 88.5,260.54 89.0,260.62 89.5,260.69 90.0,260.76 90.5,260.81 91.0,260.86 91.5,260.90 92.0,260.94 92.5,260.97 93.0,260.98 93.5,261.00 94.0,261.00 94.5,261.00 95.0,260.98 95.5,260.97 96.0,260.94 96.5,260.90 97.0,260.86 97.5,260.81 98.0,260.76 98.5,260.69 99.0,260.62 99.5,260.54 100.0,260.45 100.5,260.36 101.0,260.26 101.5,260.15 102.0,260.03 102.5,259.90 103.0,259.77 103.5,259.63 104.0,259.48 104.5,259.33 105.0,259.17 105.5,259.00 106.0,258.82 106.5,258.64 107.0,258.45 107.5,258.25 108.0,258.04 108.5,257.83 109.0,257.61 109.5,257.38 110.0,257.14 110.5,256.90 111.0,256.65 111.5,256.40 112.0,256.13 112.5,255.86 113.0,255.58 113.5,255.30 114.0,255.01 114.5,254.71 115.0,254.40 115.5,254.09 116.0,253.77 116.5,253.45 117.0,253.11 117.5,252.77 118.0,252.43 118.5,252.08 119.0,251.72 119.5,251.35 120.0,250.98 120.5,250.60 121.0,250.21 121.5,249.82 122.0,249.42 122.5,249.02 123.0,248.61 123.5,248.19 124.0,247.77 124.5,247.34 125.0,246.91 125.5,246.46 126.0,246.02 126.5,245.56 127.0,245.11 127.5,244.64 128.0,244.17 128.5,243.69 129.0,243.21 129.5,242.72 130.0,242.23 130.5,241.73 131.0,241.23 131.5,240.72 132.0,240.21 132.5,239.69 133.0,239.16 133.5,238.63 134.0,238.10 134.5,237.56 135.0,237.01 135.5,236.46 136.0,235.90 136.5,235.35 137.0,234.78 137.5,234.21 138.0,233.64 138.5,233.06 139.0,232.48 139.5,231.89 140.0,231.30 140.5,230.70 141.0,230.10 141.5,229.50 142.0,228.89 142.5,228.28 143.0,227.66 143.5,227.04 144.0,226.42 144.5,225.79 145.0,225.16 145.5,224.53 146.0,223.89 146.5,223.25 147.0,222.60 147.5,221.95 148.0,221.30 148.5,220.65 149.0,219.99 149.5,219.33 150.0,218.67 150.5,218.00 151.0,217.33 151.5,216.66 152.0,215.99 152.5,215.31 153.0,214.63 153.5,213.95 154.0,213.27 154.5,212.58 155.0,211.89 155.5,211.20 156.0,210.51 156.5,209.81 157.0,209.12 157.5,208.42 158.0,207.72 158.5,207.02 159.0,206.32 159.5,205.61 160.0,204.91 160.5,204.20 161.0,203.49 161.5,202.78 162.0,202.07 162.5,201.36 163.0,200.65 163.5,199.94 164.0,199.22 164.5,198.51 165.0,197.80 165.5,197.08 166.0,196.36 166.5,195.65 167.0,194.93 167.5,194.22 168.0,193.50 168.5,192.84 169.0,192.18 169.5,191.52 170.0,190.86 170.5,190.19 171.0,189.53 171.5,188.87 172.0,188.22 172.5,187.56 173.0,186.90 173.5,186.24 174.0,185.58 174.5,184.93 175.0,184.27 175.5,183.62 176.0,182.96 176.5,182.31 177.0,181.66 177.5,181.01 178.0,180.36 178.5,179.71 179.0,179.06 179.5,178.42 180.0,177.77 180.5,177.13 181.0,176.49 181.5,175.85 182.0,175.21 182.5,174.57 183.0,173.94 183.5,173.31 184.0,172.68 184.5,172.05 185.0,171.42 185.5,170.80 186.0,170.17 186.5,169.55 187.0,168.94 187.5,168.32 188.0,167.71 188.5,167.10 189.0,166.49 189.5,165.88 190.0,165.28 190.5,164.68 191.0,164.08 191.5,163.48 192.0,162.89 192.5,162.30 193.0,161.72 193.5,161.13 194.0,160.55 194.5,159.97 195.0,159.40 195.5,158.83 196.0,158.26 196.5,157.70 197.0,157.14 197.5,156.58 198.0,156.02 198.5,155.47 199.0,154.93 199.5,154.38 200.0,153.84 200.5,153.31 201.0,152.77 201.5,152.25 202.0,151.72 202.5,151.20 203.0,150.68 203.5,150.17 204.0,149.66 204.5,149.16 205.0,148.66 205.5,148.16 206.0,147.67 206.5,147.18 207.0,146.70 207.5,146.22 208.0,145.75 208.5,145.28 209.0,144.81 209.5,144.35 210.0,143.89 210.5,143.44 211.0,142.99 211.5,142.55 212.0,142.12 212.5,141.68 213.0,141.26 213.5,140.83 214.0,140.42 214.5,140.00 215.0,139.60 215.5,139.19 216.0,138.80 216.5,138.40 217.0,138.02 217.5,137.63 218.0,137.26 218.5,136.89 219.0,136.52 219.5,136.16 220.0,135.80 220.5,135.45 221.0,135.11 221.5,134.77 222.0,134.44 222.5,134.11 223.0,133.79 223.5,133.47 224.0,133.16 224.5,132.85 225.0,132.55 225.5,132.26 226.0,131.97 226.5,131.69 227.0,131.41 227.5,131.14 228.0,130.88 228.5,130.62 229.0,130.37 229.5,130.12 230.0,129.88 230.5,129.64 231.0,129.41 231.5,129.19 232.0,128.97 232.5,128.76 233.0,128.56 233.5,128.36 234.0,128.17 234.5,127.98 235.0,127.80 235.5,127.62 236.0,127.46 236.5,127.29 237.0,127.14 237.5,126.99 238.0,126.85 238.5,126.71 239.0,126.58 239.5,126.45 240.0,126.34 240.5,126.22 241.0,126.12 241.5,126.02 242.0,125.93 242.5,125.84 243.0,125.76 243.5,125.69 244.0,125.62 244.5,125.56 245.0,125.51 245.5,125.46 246.0,125.42 246.5,125.38 247.0,125.35 247.5,125.33 248.0,125.31 248.5,125.30 249.0,125.30 249.5,125.30 250.0,125.31 250.5,125.33 251.0,125.35 251.5,125.38 252.0,125.42 252.5,125.46 253.0,125.51 253.5,125.56 254.0,125.62 254.5,125.69 255.0,125.76 255.5,125.84 256.0,125.93 256.5,126.02 257.0,126.12 257.5,126.22 258.0,126.34 258.5,126.45 259.0,126.58 259.5,126.71 260.0,126.85 260.5,126.99 261.0,127.14 261.5,127.29 262.0,127.46 262.5,127.62 263.0,127.80 263.5,127.98 264.0,128.17 264.5,128.36 265.0,128.56 265.5,128.76 266.0,128.97 266.5,129.19 267.0,129.41 267.5,129.64 268.0,129.88 268.5,130.12 269.0,130.37 269.5,130.62 270.0,130.88 270.5,131.14 271.0,131.41 271.5,131.69 272.0,131.97 272.5,132.26 273.0,132.55 273.5,132.85 274.0,133.16 274.5,133.47 275.0,133.79 275.5,134.11 276.0,134.44 276.5,134.77 277.0,135.11 277.5,135.45 278.0,135.80 278.5,136.16 279.0,136.52 279.5,136.89 280.0,137.26 280.5,137.63 281.0,138.02 281.5,138.40 282.0,138.80 282.5,139.19 283.0,139.60 283.5,140.00 284.0,140.42 284.5,140.83 285.0,141.26 285.5,141.68 286.0,142.12 286.5,142.55 287.0,142.99 287.5,143.44 288.0,143.89 288.5,144.35 289.0,144.81 289.5,145.28 290.0,145.75 290.5,146.22 291.0,146.70 291.5,147.18 292.0,147.67 292.5,148.16 293.0,148.66 293.5,149.16 294.0,149.66 294.5,150.17 295.0,150.68 295.5,151.20 296.0,151.72 296.5,152.25 297.0,152.77 297.5,153.31 298.0,153.84 298.5,154.38 299.0,154.93 299.5,155.47 300.0,156.02 300.5,156.58 301.0,157.14 301.5,157.70 302.0,158.26 302.5,158.83 303.0,159.40 303.5,159.97 304.0,160.55 304.5,161.13 305.0,161.72 305.5,162.30 306.0,162.89 306.5,163.48 307.0,164.08 307.5,164.68 308.0,165.28 308.5,165.88 309.0,166.49 309.5,167.10 310.0,167.71 310.5,168.32 311.0,168.94 311.5,169.55 312.0,170.17 312.5,170.80 313.0,171.42 313.5,172.05 314.0,172.68 314.5,173.31 315.0,173.94 315.5,174.57 316.0,175.21 316.5,175.85 317.0,176.49 317.5,177.13 318.0,177.77 318.5,178.42 319.0,179.06 319.5,179.71 320.0,180.36 320.5,181.01 321.0,181.66 321.5,182.31 322.0,182.96 322.5,183.62 323.0,184.27 323.5,184.93 324.0,185.58 324.5,186.24 325.0,186.90 325.5,187.56 326.0,188.22 326.5,188.87 327.0,189.53 327.5,190.19 328.0,190.86 328.5,191.52 329.0,192.18 329.5,192.84 330.0,193.50 330.5,194.22 331.0,194.93 331.5,195.65 332.0,196.36 332.5,197.08 333.0,197.80 333.5,198.51 334.0,199.22 334.5,199.94 335.0,200.65 335.5,201.36 336.0,202.07 336.5,202.78 337.0,203.49 337.5,204.20 338.0,204.91 338.5,205.61 339.0,206.32 339.5,207.02 340.0,207.72 340.5,208.42 341.0,209.12 341.5,209.81 342.0,210.51 342.5,211.20 343.0,211.89 343.5,212.58 344.0,213.27 344.5,213.95 345.0,214.63 345.5,215.31 346.0,215.99 346.5,216.66 347.0,217.33 347.5,218.00 348.0,218.67 348.5,219.33 349.0,219.99 349.5,220.65 350.0,221.30 350.5,221.95 351.0,222.60 351.5,223.25 352.0,223.89 352.5,224.53 353.0,225.16 353.5,225.79 354.0,226.42 354.5,227.04 355.0,227.66 355.5,228.28 356.0,228.89 356.5,229.50 357.0,230.10 357.5,230.70 358.0,231.30 358.5,231.89 359.0,232.48 359.5,233.06 360.0,233.64 360.5,234.21 361.0,234.78 361.5,235.35 362.0,235.90 362.5,236.46 363.0,237.01 363.5,237.56 364.0,238.10 364.5,238.63 365.0,239.16 365.5,239.69 366.0,240.21 366.5,240.72 367.0,241.23 367.5,241.73 368.0,242.23 368.5,242.72 369.0,243.21 369.5,243.69 370.0,244.17 370.5,244.64 371.0,245.11 371.5,245.56 372.0,246.02 372.5,246.46 373.0,246.91 373.5,247.34 374.0,247.77 374.5,248.19 375.0,248.61 375.5,249.02 376.0,249.42 376.5,249.82 377.0,250.21 377.5,250.60 378.0,250.98 378.5,251.35 379.0,251.72 379.5,252.08 380.0,252.43 380.5,252.77 381.0,253.11 381.5,253.45 382.0,253.77 382.5,254.09 383.0,254.40 383.5,254.71 384.0,255.01 384.5,255.30 385.0,255.58 385.5,255.86 386.0,256.13 386.5,256.40 387.0,256.65 387.5,256.90 388.0,257.14 388.5,257.38 389.0,257.61 389.5,257.83 390.0,258.04 390.5,258.25 391.0,258.45 391.5,258.64 392.0,258.82 392.5,259.00 393.0,259.17 393.5,259.33 394.0,259.48 394.5,259.63 395.0,259.77 395.5,259.90 396.0,260.03 396.5,260.15 397.0,260.26 397.5,260.36 398.0,260.45 398.5,260.54 399.0,260.62 399.5,260.69 400.0,260.76 400.5,260.81 401.0,260.86 401.5,260.90 402.0,260.94 402.5,260.97 403.0,260.98 403.5,261.00 404.0,261.00 404.5,261.00 405.0,260.98 405.5,260.97 406.0,260.94 406.5,260.90 407.0,260.86 407.5,260.81 408.0,260.76 408.5,260.69 409.0,260.62 409.5,260.54 410.0,260.45 410.5,260.36 411.0,260.26 411.5,260.15 412.0,260.03 412.5,259.90 413.0,259.77 413.5,259.63 414.0,259.48 414.5,259.33 415.0,259.17 415.5,259.00 416.0,258.82 416.5,258.64 417.0,258.45 417.5,258.25 418.0,258.04 418.5,257.83 419.0,257.61 419.5,257.38 420.0,257.14 420.5,256.90 421.0,256.65 421.5,256.40 422.0,256.13 422.5,255.86 423.0,255.58 423.5,255.30 424.0,255.01 424.5,254.71 425.0,254.40 425.5,254.09 426.0,253.77 426.5,253.45 427.0,253.11 427.5,252.77 428.0,252.43 428.5,252.08 429.0,251.72 429.5,251.35 430.0,250.98 430.5,250.60 431.0,250.21 431.5,249.82 432.0,249.42 432.5,249.02 433.0,248.61 433.5,248.19 434.0,247.77 434.5,247.34 435.0,246.91 435.5,246.46 436.0,246.02 436.5,245.56 437.0,245.11 437.5,244.64 438.0,244.17 438.5,243.69 439.0,243.21 439.5,242.72 440.0,242.23 440.5,241.73 441.0,241.23 441.5,240.72 442.0,240.21 442.5,239.69 443.0,239.16 443.5,238.63 444.0,238.10 444.5,237.56 445.0,237.01 445.5,236.46 446.0,235.90 446.5,235.35 447.0,234.78 447.5,234.21 448.0,233.64 448.5,233.06 449.0,232.48 449.5,231.89 450.0,231.30 450.5,230.70 451.0,230.10 451.5,229.50 452.0,228.89 452.5,228.28 453.0,227.66 453.5,227.04 454.0,226.42 454.5,225.79 455.0,225.16 455.5,224.53 456.0,223.89 456.5,223.25 457.0,222.60 457.5,221.95 458.0,221.30 458.5,220.65 459.0,219.99 459.5,219.33 460.0,218.67 460.5,218.00 461.0,217.33 461.5,216.66 462.0,215.99 462.5,215.31 463.0,214.63 463.5,213.95 464.0,213.27 464.5,212.58 465.0,211.89 465.5,211.20 466.0,210.51 466.5,209.81 467.0,209.12 467.5,208.42 468.0,207.72 468.5,207.02 469.0,206.32 469.5,205.61 470.0,204.91 470.5,204.20 471.0,203.49 471.5,202.78 472.0,202.07 472.5,201.36 473.0,200.65 473.5,199.94 474.0,199.22 474.5,198.51 475.0,197.80 475.5,197.08 476.0,196.36 476.5,195.65 477.0,194.93 477.5,194.22 478.0,193.50 478.5,192.84 479.0,192.18 479.5,191.52 480.0,190.86 480.5,190.19 481.0,189.53 481.5,188.87 482.0,188.22 482.5,187.56 483.0,186.90 483.5,186.24 484.0,185.58 484.5,184.93 485.0,184.27 485.5,183.62 486.0,182.96 486.5,182.31 487.0,181.66 487.5,181.01 488.0,180.36 488.5,179.71 489.0,179.06 489.5,178.42 490.0,177.77 490.5,177.13 491.0,176.49 491.5,175.85 492.0,175.21 492.5,174.57 493.0,173.94 493.5,173.31 494.0,172.68 494.5,172.05 495.0,171.42 495.5,170.80 496.0,170.17 496.5,169.55 497.0,168.94 497.5,168.32 498.0,167.71 498.5,167.10 499.0,166.49 499.5,165.88 500.0,165.28 500.5,164.68 501.0,164.08 501.5,163.48 502.0,162.89 502.5,162.30 503.0,161.72 503.5,161.13 504.0,160.55 504.5,159.97 505.0,159.40 505.5,158.83 506.0,158.26 506.5,157.70 507.0,157.14 507.5,156.58 508.0,156.02 508.5,155.47 509.0,154.93 509.5,154.38 510.0,153.84 510.5,153.31 511.0,152.77 511.5,152.25 512.0,151.72 512.5,151.20 513.0,150.68 513.5,150.17 514.0,149.66 514.5,149.16 515.0,148.66 515.5,148.16 516.0,147.67 516.5,147.18 517.0,146.70 517.5,146.22 518.0,145.75 518.5,145.28 519.0,144.81 519.5,144.35 520.0,143.89 520.5,143.44 521.0,142.99 521.5,142.55 522.0,142.12 522.5,141.68 523.0,141.26 523.5,140.83 524.0,140.42 524.5,140.00 525.0,139.60 525.5,139.19 526.0,138.80 526.5,138.40 527.0,138.02 527.5,137.63 528.0,137.26 528.5,136.89 529.0,136.52 529.5,136.16 530.0,135.80 530.5,135.45 531.0,135.11 531.5,134.77 532.0,134.44 532.5,134.11 533.0,133.79 533.5,133.47 534.0,133.16 534.5,132.85 535.0,132.55 535.5,132.26 536.0,131.97 536.5,131.69 537.0,131.41 537.5,131.14 538.0,130.88 538.5,130.62 539.0,130.37 539.5,130.12 540.0,129.88 540.5,129.64 541.0,129.41 541.5,129.19 542.0,128.97 542.5,128.76 543.0,128.56 543.5,128.36 544.0,128.17 544.5,127.98 545.0,127.80 545.5,127.62 546.0,127.46 546.5,127.29 547.0,127.14 547.5,126.99 548.0,126.85 548.5,126.71 549.0,126.58 549.5,126.45 550.0,126.34 550.5,126.22 551.0,126.12 551.5,126.02 552.0,125.93 552.5,125.84 553.0,125.76 553.5,125.69 554.0,125.62 554.5,125.56 555.0,125.51 555.5,125.46 556.0,125.42 556.5,125.38 557.0,125.35 557.5,125.33 558.0,125.31 558.5,125.30 559.0,125.30 559.5,125.30 560.0,125.31 560.5,125.33 561.0,125.35 561.5,125.38 562.0,125.42 562.5,125.46 563.0,125.51 563.5,125.56 564.0,125.62 564.5,125.69 565.0,125.76 565.5,125.84 566.0,125.93 566.5,126.02 567.0,126.12 567.5,126.22 568.0,126.34 568.5,126.45 569.0,126.58 569.5,126.71 570.0,126.85 570.5,126.99 571.0,127.14 571.5,127.29 572.0,127.46 572.5,127.62 573.0,127.80 573.5,127.98 574.0,128.17 574.5,128.36 575.0,128.56 575.5,128.76 576.0,128.97 576.5,129.19 577.0,129.41 577.5,129.64 578.0,129.88 578.5,130.12 579.0,130.37 579.5,130.62 580.0,130.88 580.5,131.14 581.0,131.41 581.5,131.69 582.0,131.97 582.5,132.26 583.0,132.55 583.5,132.85 584.0,133.16 584.5,133.47 585.0,133.79 585.5,134.11 586.0,134.44 586.5,134.77 587.0,135.11 587.5,135.45 588.0,135.80 588.5,136.16 589.0,136.52 589.5,136.89 590.0,137.26 590.5,137.63 591.0,138.02 591.5,138.40 592.0,138.80 592.5,139.19 593.0,139.60 593.5,140.00 594.0,140.42 594.5,140.83 595.0,141.26 595.5,141.68 596.0,142.12 596.5,142.55 597.0,142.99 597.5,143.44 598.0,143.89 598.5,144.35 599.0,144.81 599.5,145.28 600.0,145.75 600.5,146.22 601.0,146.70 601.5,147.18 602.0,147.67 602.5,148.16 603.0,148.66 603.5,149.16 604.0,149.66 604.5,150.17 605.0,150.68 605.5,151.20 606.0,151.72 606.5,152.25 607.0,152.77 607.5,153.31 608.0,153.84 608.5,154.38 609.0,154.93 609.5,155.47 610.0,156.02 610.5,156.58 611.0,157.14 611.5,157.70 612.0,158.26 612.5,158.83 613.0,159.40 613.5,159.97 614.0,160.55 614.5,161.13 615.0,161.72 615.5,162.30 616.0,162.89 616.5,163.48 617.0,164.08 617.5,164.68 618.0,165.28 618.5,165.88 619.0,166.49 619.5,167.10 620.0,167.71 620.5,168.32 621.0,168.94 621.5,169.55 622.0,170.17 622.5,170.80 623.0,171.42 623.5,172.05 624.0,172.68 624.5,173.31 625.0,173.94 625.5,174.57 626.0,175.21 626.5,175.85 627.0,176.49 627.5,177.13 628.0,177.77 628.5,178.42 629.0,179.06 629.5,179.71 630.0,180.36 630.5,181.01 631.0,181.66 631.5,182.31 632.0,182.96 632.5,183.62 633.0,184.27 633.5,184.93 634.0,185.58 634.5,186.24 635.0,186.90 635.5,187.56 636.0,188.22 636.5,188.87 637.0,189.53 637.5,190.19 638.0,190.86 638.5,191.52 639.0,192.18 639.5,192.84 640.0,193.50" fill="none" stroke="#ff0000" stroke-width="1" shape-rendering="crispEdges"/><rect x="97" y="49" width="1" height="288" fill="#ffff00"/><rect x="252" y="49" width="1" height="288" fill="#00ffff"/><rect x="91" y="43" width="13" height="1" fill="#ffff00"/><rect x="92" y="44" width="11" height="1" fill="#ffff00"/><rect x="93" y="45" width="9" height="1" fill="#ffff00"/><rect x="94" y="46" width="7" height="1" fill="#ffff00"/><rect x="95" y="47" width="5" height="1" fill="#ffff00"/><rect x="96" y="48" width="3" height="1" fill="#ffff00"/><rect x="97" y="49" width="1" height="1" fill="#ffff00"/><rect x="244" y="41" width="17" height="1" fill="#00ffff"/><rect x="245" y="42" width="15" height="1" fill="#00ffff"/><rect x="246" y="43" width="13" height="1" fill="#00ffff"/><rect x="247" y="44" width="11" height="1" fill="#00ffff"/><rect x="248" y="45" width="9" height="1" fill="#00ffff"/><rect x="249" y="46" width="7" height="1" fill="#00ffff"/><rect x="250" y="47" width="5" height="1" fill="#00ffff"/><rect x="251" y="48" width="3" height="1" fill="#00ffff"/><rect x="96" y="44" width="2" height="1" fill="#000"/><rect x="95" y="45" width="1" height="1" fill="#000"/><rect x="98" y="45" width="1" height="1" fill="#000"/><rect x="97" y="46" width="1" height="1" fill="#000"/><rect x="96" y="47" width="3" height="1" fill="#000"/><rect x="250" y="42" width="3" height="1" fill="#000"/><rect x="251" y="43" width="2" height="4" fill="#000"/><rect x="96" y="49" width="3" height="1" fill="#ffff00"/><rect x="97" y="49" width="1" height="1" fill="#0000ff"/><rect x="251" y="49" width="3" height="1" fill="#00ffff"/><rect x="252" y="49" width="1" height="1" fill="#ff0000"/><rect x="96" y="128" width="1" height="1" fill="#ffff00"/><rect x="98" y="128" width="1" height="1" fill="#ffff00"/><rect x="95" y="129" width="1" height="1" fill="#ffff00"/><rect x="99" y="129" width="1" height="1" fill="#ffff00"/><rect x="94" y="130" width="1" height="3" fill="#ffff00"/><rect x="99" y="130" width="1" height="3" fill="#ffff00"/><rect x="95" y="133" width="5" height="1" fill="#ffff00"/><rect x="97" y="127" width="1" height="7" fill="#ffff00"/><rect x="251" y="251" width="1" height="1" fill="#00ffff"/><rect x="253" y="251" width="1" height="1" fill="#00ffff"/><rect x="250" y="252" width="1" height="1" fill="#00ffff"/><rect x="254" y="252" width="1" height="1" fill="#00ffff"/><rect x="249" y="253" width="1" height="3" fill="#00ffff"/><rect x="254" y="253" width="1" height="3" fill="#00ffff"/><rect x="250" y="256" width="5" height="1" fill="#00ffff"/><rect x="252" y="250" width="1" height="7" fill="#00ffff"/></svg><div style="position:absolute;left:9px;top:348px;width:642px;height:20px;background:#f0f0f0"></div><div style="position:absolute;left:30px;top:349px;width:21px;height:14px;background:#cdcdcd"></div><svg style="position:absolute;left:12px;top:350px" width="14" height="12"><path d="M9.8 2.4 L5.2 5.6 L9.8 8.8" fill="none" stroke="#555" stroke-width="2.2"/></svg><svg style="position:absolute;left:634px;top:350px" width="14" height="12"><path d="M4.2 2.4 L8.8 5.6 L4.2 8.8" fill="none" stroke="#555" stroke-width="2.2"/></svg><div style="position:absolute;left:9px;top:368px;width:70px;height:74px;box-sizing:border-box;border:1px solid;border-color:#a0a0a0 #fff #fff #a0a0a0"></div><div style="position:absolute;left:10px;top:369px;width:68px;height:72px;box-sizing:border-box;border:1px solid;border-color:#fff #a0a0a0 #a0a0a0 #fff"></div><div style="position:absolute;left:16.10px;top:381.42px;font-size:12.5px;line-height:12.5px;color:#000;white-space:pre;letter-spacing:-0.300px;">T1</div><div style="position:absolute;left:16.10px;top:399.42px;font-size:12.5px;line-height:12.5px;color:#000;white-space:pre;letter-spacing:0.400px;">T2</div><div style="position:absolute;left:16.10px;top:423.42px;font-size:12.5px;line-height:12.5px;color:#000;white-space:pre;letter-spacing:0.200px;">T2-T1</div><div style="position:absolute;left:39px;top:377px;width:16px;height:20px;box-sizing:border-box;background:#e1e1e1;border:2px solid #0078d7;"></div><div style="position:absolute;left:41px;top:379px;width:12px;height:16px;box-sizing:border-box;border:1px dotted #000"></div><svg style="position:absolute;left:0;top:0" width="660" height="557"><path d="M43 386.5 L48 381.7 L48 384.9 L52.8 384.9 L52.8 388.1 L48 388.1 L48 391.3 Z" fill="#000"/></svg><div style="position:absolute;left:59px;top:377px;width:15px;height:20px;box-sizing:border-box;background:#e1e1e1;border:1px solid #adadad;"></div><svg style="position:absolute;left:0;top:0" width="660" height="557"><path d="M71.4 386.5 L66.4 381.7 L66.4 384.9 L61.8 384.9 L61.8 388.1 L66.4 388.1 L66.4 391.3 Z" fill="#000"/></svg><div style="position:absolute;left:39px;top:399px;width:16px;height:18px;box-sizing:border-box;background:#e1e1e1;border:1px solid #adadad;"></div><svg style="position:absolute;left:0;top:0" width="660" height="557"><path d="M43 407.5 L48 402.7 L48 405.9 L52.2 405.9 L52.2 409.1 L48 409.1 L48 412.3 Z" fill="#000"/></svg><div style="position:absolute;left:59px;top:399px;width:15px;height:18px;box-sizing:border-box;background:#e1e1e1;border:1px solid #adadad;"></div><svg style="position:absolute;left:0;top:0" width="660" height="557"><path d="M71.4 407.5 L66.4 402.7 L66.4 405.9 L61.8 405.9 L61.8 409.1 L66.4 409.1 L66.4 412.3 Z" fill="#000"/></svg><div style="position:absolute;left:79px;top:368px;width:378px;height:74px;background:#ffffff"></div><div style="position:absolute;left:79px;top:368px;width:377px;height:73px;background:#a0a0a0"></div><div style="position:absolute;left:80px;top:369px;width:376px;height:72px;background:#e3e3e3"></div><div style="position:absolute;left:80px;top:369px;width:375px;height:71px;background:#696969"></div><div style="position:absolute;left:81px;top:370px;width:374px;height:70px;background:#ffffff"></div><div style="position:absolute;left:112.50px;top:373.42px;font-size:12.5px;line-height:12.5px;color:#000;white-space:pre;letter-spacing:0.700px;">Time</div><div style="position:absolute;left:88.10px;top:389.42px;font-size:12.5px;line-height:12.5px;color:#000;white-space:pre;letter-spacing:0.378px;">748.387 us</div><div style="position:absolute;left:88.50px;top:405.42px;font-size:12.5px;line-height:12.5px;color:#000;white-space:pre;letter-spacing:0.333px;">248.387 us</div><div style="position:absolute;left:84.50px;top:421.42px;font-size:12.5px;line-height:12.5px;color:#000;white-space:pre;letter-spacing:0.280px;">-500.000 us</div><div style="position:absolute;left:188.40px;top:373.42px;font-size:12.5px;line-height:12.5px;color:#000;white-space:pre;letter-spacing:-0.075px;">Channel_A</div><div style="position:absolute;left:180.30px;top:389.42px;font-size:12.5px;line-height:12.5px;color:#000;white-space:pre;letter-spacing:0.160px;">-640.054 mV</div><div style="position:absolute;left:184.50px;top:405.42px;font-size:12.5px;line-height:12.5px;color:#000;white-space:pre;letter-spacing:0.267px;">649.453 mV</div><div style="position:absolute;left:196.60px;top:421.42px;font-size:12.5px;line-height:12.5px;color:#000;white-space:pre;letter-spacing:0.117px;">1.290 V</div><div style="position:absolute;left:284.30px;top:373.42px;font-size:12.5px;line-height:12.5px;color:#000;white-space:pre;letter-spacing:-0.087px;">Channel_B</div><div style="position:absolute;left:292.30px;top:389.42px;font-size:12.5px;line-height:12.5px;color:#000;white-space:pre;letter-spacing:0.217px;">7.025 V</div><div style="position:absolute;left:288.20px;top:405.42px;font-size:12.5px;line-height:12.5px;color:#000;white-space:pre;letter-spacing:0.400px;">-6.958 V</div><div style="position:absolute;left:284.30px;top:421.42px;font-size:12.5px;line-height:12.5px;color:#000;white-space:pre;letter-spacing:0.262px;">-13.983 V</div><div style="position:absolute;left:465px;top:377px;width:71px;height:26px;box-sizing:border-box;background:#e1e1e1;border:1px solid #adadad;"></div><div style="position:absolute;left:476.50px;top:385.42px;font-size:12.5px;line-height:12.5px;color:#000;white-space:pre;letter-spacing:0.017px;">Reverse</div><div style="position:absolute;left:465px;top:411px;width:71px;height:26px;box-sizing:border-box;background:#e1e1e1;border:1px solid #adadad;"></div><div style="position:absolute;left:485.60px;top:419.42px;font-size:12.5px;line-height:12.5px;color:#000;white-space:pre;letter-spacing:-0.133px;">Save</div><div style="position:absolute;left:547.20px;top:431.42px;font-size:12.5px;line-height:12.5px;color:#000;white-space:pre;letter-spacing:0.255px;">Ext. trigger</div><svg style="position:absolute;left:610px;top:424px" width="28" height="28"><circle cx="14" cy="14" r="7.6" fill="#fff" stroke="#b4b4b4" stroke-width="1"/></svg><div style="position:absolute;left:10px;top:458px;width:6px;height:1px;background:#dcdcdc"></div><div style="position:absolute;left:75px;top:458px;width:95px;height:1px;background:#dcdcdc"></div><div style="position:absolute;left:232px;top:458px;width:89px;height:1px;background:#dcdcdc"></div><div style="position:absolute;left:381px;top:458px;width:93px;height:1px;background:#dcdcdc"></div><div style="position:absolute;left:520px;top:458px;width:129px;height:1px;background:#dcdcdc"></div><div style="position:absolute;left:162px;top:458px;width:1px;height:89px;background:#dcdcdc"></div><div style="position:absolute;left:163px;top:458px;width:1px;height:89px;background:#dcdcdc"></div><div style="position:absolute;left:312px;top:458px;width:1px;height:89px;background:#dcdcdc"></div><div style="position:absolute;left:313px;top:458px;width:1px;height:89px;background:#dcdcdc"></div><div style="position:absolute;left:466px;top:458px;width:1px;height:89px;background:#dcdcdc"></div><div style="position:absolute;left:467px;top:458px;width:1px;height:89px;background:#dcdcdc"></div><div style="position:absolute;left:648px;top:458px;width:1px;height:89px;background:#dcdcdc"></div><div style="position:absolute;left:18.50px;top:453.42px;font-size:12.5px;line-height:12.5px;color:#000;white-space:pre;letter-spacing:0.143px;">Timebase</div><div style="position:absolute;left:171.70px;top:453.42px;font-size:12.5px;line-height:12.5px;color:#000;white-space:pre;letter-spacing:0.075px;">Channel A</div><div style="position:absolute;left:321.50px;top:453.42px;font-size:12.5px;line-height:12.5px;color:#000;white-space:pre;letter-spacing:-0.163px;">Channel B</div><div style="position:absolute;left:476.10px;top:453.42px;font-size:12.5px;line-height:12.5px;color:#000;white-space:pre;letter-spacing:0.367px;">Trigger</div><div style="position:absolute;left:11.50px;top:475.42px;font-size:12.5px;line-height:12.5px;color:#000;white-space:pre;letter-spacing:0.300px;">Scale:</div><div style="position:absolute;left:56px;top:466px;width:100px;height:24px;box-sizing:border-box;background:#fff;border:1px solid #7a7a7a;"></div><div style="position:absolute;left:61.10px;top:472.42px;font-size:12.5px;line-height:12.5px;color:#000;white-space:pre;letter-spacing:0.200px;">200 us/Div</div><div style="position:absolute;left:11.30px;top:499.42px;font-size:12.5px;line-height:12.5px;color:#000;white-space:pre;letter-spacing:0.291px;">X pos.(Div):</div><div style="position:absolute;left:84px;top:492px;width:72px;height:24px;box-sizing:border-box;background:#fff;border:1px solid #7a7a7a;"></div><div style="position:absolute;left:90.80px;top:498.42px;font-size:12.5px;line-height:12.5px;color:#000;white-space:pre;">0</div><div style="position:absolute;left:18px;top:521px;width:28px;height:22px;box-sizing:border-box;background:#cce4f7;border:1px solid #005499;"></div><div style="position:absolute;left:21.60px;top:527.42px;font-size:12.5px;line-height:12.5px;color:#000;white-space:pre;letter-spacing:0.600px;">Y/T</div><div style="position:absolute;left:48px;top:521px;width:31px;height:22px;box-sizing:border-box;background:#e1e1e1;border:1px solid #adadad;"></div><div style="position:absolute;left:52.00px;top:527.42px;font-size:12.5px;line-height:12.5px;color:#000;white-space:pre;letter-spacing:-0.300px;">Add</div><div style="position:absolute;left:83px;top:521px;width:31px;height:22px;box-sizing:border-box;background:#e1e1e1;border:1px solid #adadad;"></div><div style="position:absolute;left:87.50px;top:527.42px;font-size:12.5px;line-height:12.5px;color:#000;white-space:pre;letter-spacing:0.150px;">B/A</div><div style="position:absolute;left:116px;top:521px;width:33px;height:22px;box-sizing:border-box;background:#e1e1e1;border:1px solid #adadad;"></div><div style="position:absolute;left:121.70px;top:527.42px;font-size:12.5px;line-height:12.5px;color:#000;white-space:pre;letter-spacing:-0.300px;">A/B</div><div style="position:absolute;left:165.30px;top:475.42px;font-size:12.5px;line-height:12.5px;color:#000;white-space:pre;letter-spacing:0.260px;">Scale:</div><div style="position:absolute;left:208px;top:466px;width:102px;height:24px;box-sizing:border-box;background:#fff;border:1px solid #7a7a7a;"></div><div style="position:absolute;left:213.30px;top:472.42px;font-size:12.5px;line-height:12.5px;color:#000;white-space:pre;letter-spacing:0.211px;">500 mV/Div</div><div style="position:absolute;left:166.10px;top:499.42px;font-size:12.5px;line-height:12.5px;color:#000;white-space:pre;letter-spacing:0.127px;">Y pos.(Div):</div><div style="position:absolute;left:238px;top:492px;width:72px;height:24px;box-sizing:border-box;background:#fff;border:1px solid #7a7a7a;"></div><div style="position:absolute;left:244.60px;top:498.42px;font-size:12.5px;line-height:12.5px;color:#000;white-space:pre;">0</div><div style="position:absolute;left:167px;top:521px;width:28px;height:22px;box-sizing:border-box;background:#e1e1e1;border:1px solid #adadad;"></div><div style="position:absolute;left:173.10px;top:527.42px;font-size:12.5px;line-height:12.5px;color:#000;white-space:pre;letter-spacing:-0.600px;">AC</div><div style="position:absolute;left:197px;top:521px;width:29px;height:22px;box-sizing:border-box;background:#e1e1e1;border:1px solid #adadad;"></div><div style="position:absolute;left:208.20px;top:527.42px;font-size:12.5px;line-height:12.5px;color:#000;white-space:pre;">0</div><div style="position:absolute;left:228px;top:521px;width:30px;height:22px;box-sizing:border-box;background:#cce4f7;border:1px solid #005499;"></div><div style="position:absolute;left:234.20px;top:527.42px;font-size:12.5px;line-height:12.5px;color:#000;white-space:pre;letter-spacing:0.400px;">DC</div><svg style="position:absolute;left:282px;top:517px" width="28" height="28"><circle cx="14" cy="14" r="7.6" fill="#ffffff" stroke="#bcbcbc" stroke-width="1"/><circle cx="14" cy="14" r="4.7" fill="#cccccc"/></svg><div style="position:absolute;left:316.50px;top:475.42px;font-size:12.5px;line-height:12.5px;color:#000;white-space:pre;letter-spacing:0.260px;">Scale:</div><div style="position:absolute;left:362px;top:466px;width:102px;height:24px;box-sizing:border-box;border:1px solid;border-color:#a0a0a0 #fff #fff #a0a0a0"></div><div style="position:absolute;left:363px;top:467px;width:100px;height:22px;box-sizing:border-box;background:#fff;border:1px solid;border-color:#696969 #e3e3e3 #e3e3e3 #696969"></div><div style="position:absolute;left:367.50px;top:472.42px;font-size:12.5px;line-height:12.5px;color:#000;white-space:pre;letter-spacing:0.229px;">5  V/Div</div><div style="position:absolute;left:362px;top:466px;width:19px;height:2px;background:#f0f0f0"></div><div style="position:absolute;left:317.50px;top:499.42px;font-size:12.5px;line-height:12.5px;color:#000;white-space:pre;letter-spacing:0.127px;">Y pos.(Div):</div><div style="position:absolute;left:392px;top:492px;width:72px;height:24px;box-sizing:border-box;border:1px solid;border-color:#a0a0a0 #fff #fff #a0a0a0"></div><div style="position:absolute;left:393px;top:493px;width:70px;height:22px;box-sizing:border-box;background:#fff;border:1px solid;border-color:#696969 #e3e3e3 #e3e3e3 #696969"></div><div style="position:absolute;left:396.90px;top:498.42px;font-size:12.5px;line-height:12.5px;color:#000;white-space:pre;letter-spacing:1.400px;">-0</div><div style="position:absolute;left:319px;top:523px;width:28px;height:22px;box-sizing:border-box;background:#e1e1e1;border:1px solid #adadad;"></div><div style="position:absolute;left:325.00px;top:529.42px;font-size:12.5px;line-height:12.5px;color:#000;white-space:pre;letter-spacing:-0.500px;">AC</div><div style="position:absolute;left:349px;top:523px;width:26px;height:22px;box-sizing:border-box;background:#e1e1e1;border:1px solid #adadad;"></div><div style="position:absolute;left:358.70px;top:529.42px;font-size:12.5px;line-height:12.5px;color:#000;white-space:pre;">0</div><div style="position:absolute;left:377px;top:523px;width:30px;height:22px;box-sizing:border-box;background:#cce4f7;border:1px solid #005499;"></div><div style="position:absolute;left:383.20px;top:529.42px;font-size:12.5px;line-height:12.5px;color:#000;white-space:pre;letter-spacing:-0.200px;">DC</div><div style="position:absolute;left:409px;top:523px;width:22px;height:22px;box-sizing:border-box;background:#e1e1e1;border:1px solid #adadad;"></div><div style="position:absolute;left:416.00px;top:529.42px;font-size:12.5px;line-height:12.5px;color:#000;white-space:pre;">-</div><svg style="position:absolute;left:442px;top:518.8px" width="28" height="28"><circle cx="14" cy="14" r="7.6" fill="#ffffff" stroke="#bcbcbc" stroke-width="1"/><circle cx="14" cy="14" r="4.7" fill="#cccccc"/></svg><div style="position:absolute;left:471.50px;top:475.42px;font-size:12.5px;line-height:12.5px;color:#000;white-space:pre;letter-spacing:0.175px;">Edge:</div><div style="position:absolute;left:524px;top:471px;width:19px;height:20px;box-sizing:border-box;background:#cce4f7;border:1px solid #005499;"></div><div style="position:absolute;left:545px;top:471px;width:19px;height:20px;box-sizing:border-box;background:#e1e1e1;border:1px solid #adadad;"></div><svg style="position:absolute;left:0;top:0" width="660" height="557"><path d="M529 484.5 H533.5 V477.5 H538" fill="none" stroke="#000" stroke-width="1.2"/><path d="M531 482 L533.5 479.5 L536 482" fill="none" stroke="#000" stroke-width="1"/><path d="M550 476.5 H554.5 V483.5 H559" fill="none" stroke="#000" stroke-width="1.2"/><path d="M552 479 L554.5 481.5 L557 479" fill="none" stroke="#000" stroke-width="1"/></svg><div style="position:absolute;left:570px;top:471px;width:20px;height:22px;box-sizing:border-box;background:#cce4f7;border:1px solid #005499;"></div><div style="position:absolute;left:575.80px;top:477.42px;font-size:12.5px;line-height:12.5px;color:#000;white-space:pre;">A</div><div style="position:absolute;left:592px;top:471px;width:21px;height:22px;box-sizing:border-box;background:#cccccc;border:1px solid #bfbfbf;"></div><div style="position:absolute;left:598.40px;top:477.42px;font-size:12.5px;line-height:12.5px;color:#838383;white-space:pre;">B</div><div style="position:absolute;left:615px;top:471px;width:24px;height:22px;box-sizing:border-box;background:#cccccc;border:1px solid #bfbfbf;"></div><div style="position:absolute;left:617.40px;top:477.42px;font-size:12.5px;line-height:12.5px;color:#838383;white-space:pre;letter-spacing:-0.150px;">Ext</div><div style="position:absolute;left:471.50px;top:499.42px;font-size:12.5px;line-height:12.5px;color:#000;white-space:pre;letter-spacing:0.080px;">Level:</div><div style="position:absolute;left:523px;top:496px;width:83px;height:23px;box-sizing:border-box;border:1px solid;border-color:#a0a0a0 #fff #fff #a0a0a0"></div><div style="position:absolute;left:524px;top:497px;width:81px;height:21px;box-sizing:border-box;background:#fff;border:1px solid;border-color:#696969 #e3e3e3 #e3e3e3 #696969"></div><div style="position:absolute;left:529.60px;top:502.42px;font-size:12.5px;line-height:12.5px;color:#000;white-space:pre;">0</div><div style="position:absolute;left:607px;top:496px;width:32px;height:23px;box-sizing:border-box;border:1px solid;border-color:#a0a0a0 #fff #fff #a0a0a0"></div><div style="position:absolute;left:608px;top:497px;width:30px;height:21px;box-sizing:border-box;background:#fff;border:1px solid;border-color:#696969 #e3e3e3 #e3e3e3 #696969"></div><div style="position:absolute;left:615.80px;top:501.42px;font-size:12.5px;line-height:12.5px;color:#000;white-space:pre;">V</div><div style="position:absolute;left:474px;top:521px;width:43px;height:22px;box-sizing:border-box;background:#e1e1e1;border:1px solid #adadad;"></div><div style="position:absolute;left:476.50px;top:527.42px;font-size:12.5px;line-height:12.5px;color:#000;white-space:pre;letter-spacing:0.320px;">Single</div><div style="position:absolute;left:519px;top:521px;width:49px;height:22px;box-sizing:border-box;background:#e1e1e1;border:1px solid #adadad;"></div><div style="position:absolute;left:521.80px;top:527.42px;font-size:12.5px;line-height:12.5px;color:#000;white-space:pre;letter-spacing:0.420px;">Normal</div><div style="position:absolute;left:571px;top:521px;width:32px;height:22px;box-sizing:border-box;background:#e1e1e1;border:1px solid #adadad;"></div><div style="position:absolute;left:573.50px;top:527.42px;font-size:12.5px;line-height:12.5px;color:#000;white-space:pre;">Auto</div><div style="position:absolute;left:605px;top:521px;width:38px;height:22px;box-sizing:border-box;background:#cce4f7;border:1px solid #005499;"></div><div style="position:absolute;left:608.20px;top:527.42px;font-size:12.5px;line-height:12.5px;color:#000;white-space:pre;letter-spacing:-0.233px;">None</div><div style="position:absolute;left:649px;top:537px;width:2px;height:2px;background:#bdbdbd"></div><div style="position:absolute;left:649px;top:541px;width:2px;height:2px;background:#bdbdbd"></div><div style="position:absolute;left:645px;top:541px;width:2px;height:2px;background:#bdbdbd"></div><div style="position:absolute;left:649px;top:545px;width:2px;height:2px;background:#bdbdbd"></div><div style="position:absolute;left:645px;top:545px;width:2px;height:2px;background:#bdbdbd"></div><div style="position:absolute;left:641px;top:545px;width:2px;height:2px;background:#bdbdbd"></div>
</body></html>
